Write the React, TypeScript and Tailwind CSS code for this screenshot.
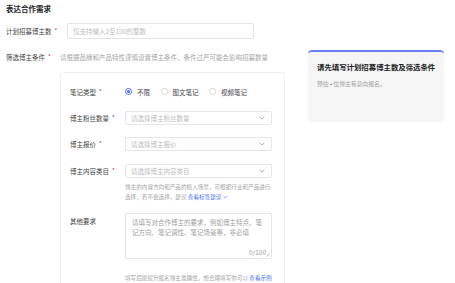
import React from "react";

const Star = () => <span className="text-[#f5222d] ml-[3px] text-[6px]">*</span>;

const Chevron = () => (
  <svg width="6" height="4" viewBox="0 0 6 4" className="shrink-0">
    <path d="M0.6 0.8 L3 3.1 L5.4 0.8" fill="none" stroke="#9a9a9a" strokeWidth="0.8" />
  </svg>
);

const Select = ({ text }: { text: string }) => (
  <div className="w-[147px] h-[14px] border border-[#e6e6e6] rounded-[2px] flex items-center justify-between pl-[5px] pr-[6px] text-[6.5px] text-[#bdbdbd]">
    <span>{text}</span>
    <Chevron />
  </div>
);

const Radio = ({ checked, label }: { checked?: boolean; label: string }) => (
  <div className="flex items-center">
    {checked ? (
      <div className="w-[7px] h-[7px] rounded-full border border-[#4c6ef5] flex items-center justify-center">
        <div className="w-[3.5px] h-[3.5px] rounded-full bg-[#4c6ef5]" />
      </div>
    ) : (
      <div className="w-[7px] h-[7px] rounded-full border border-[#d9d9d9] bg-white" />
    )}
    <span className="ml-[5px] text-[6.5px] text-[#444]">{label}</span>
  </div>
);

export default function App() {
  return (
    <div className="w-[455px] h-[283px] overflow-hidden bg-white font-['Noto_Sans_CJK_SC',sans-serif] leading-[10px]">
      <div className="flex">
        <div className="w-[300px] pl-[6px] shrink-0">
          <div className="pt-[4px] text-[7.5px] leading-[10px] font-bold text-[#222]">表达合作需求</div>

          <div className="mt-[9px] flex items-center h-[16px]">
            <div className="w-[61px] text-[6.5px] text-[#444] flex items-center">
              计划招募博主数<Star />
            </div>
            <div className="w-[187px] h-[16px] border border-[#e6e6e6] rounded-[2px] pl-[5px] flex items-center text-[6.5px] text-[#bdbdbd]">
              仅支持输入2至100的整数
            </div>
          </div>

          <div className="mt-[13px] flex items-center h-[10px]">
            <div className="w-[54px] text-[6.5px] text-[#444] flex items-center">
              筛选博主条件<Star />
            </div>
            <div className="text-[6.5px] text-[#a6a6a6] whitespace-nowrap">
              请根据品牌和产品特性谨慎设置博主条件，条件过严可能会影响招募数量
            </div>
          </div>

          <div className="mt-[10px] ml-[54px] w-[225px] h-[260px] border border-[#f0f0f0] rounded-[3px] pl-[9px] pt-[11.5px]">
            <div className="flex items-center h-[14px]">
              <div className="w-[55px] text-[6.5px] text-[#444] flex items-center">
                笔记类型<Star />
              </div>
              <div className="flex items-center gap-[10.5px]">
                <Radio checked label="不限" />
                <Radio label="图文笔记" />
                <Radio label="视频笔记" />
              </div>
            </div>

            <div className="mt-[12.5px] flex items-center h-[14px]">
              <div className="w-[55px] text-[6.5px] text-[#444] flex items-center">
                博主粉丝数量<Star />
              </div>
              <Select text="请选择博主粉丝数量" />
            </div>

            <div className="mt-[12px] flex items-center h-[14px]">
              <div className="w-[55px] text-[6.5px] text-[#444] flex items-center">
                博主报价<Star />
              </div>
              <Select text="请选择博主报价" />
            </div>

            <div className="mt-[13px] flex items-center h-[14px]">
              <div className="w-[55px] text-[6.5px] text-[#444] flex items-center">
                博主内容类目<Star />
              </div>
              <Select text="请选择博主内容类目" />
            </div>

            <div className="mt-[3.5px] ml-[55px] w-[150px] text-[5.6px] leading-[10px] text-[#a6a6a6]">
              <div className="whitespace-nowrap">博主的内容方向和产品的植入场景，可根据行业和产品进行</div>
              <div className="whitespace-nowrap flex items-center">
                选择，若不会选择，建议&nbsp;<span className="text-[#4c6ef5]">查看标签建议</span>
                <svg width="5" height="4" viewBox="0 0 6 4" className="ml-[2px]">
                  <path d="M0.6 0.8 L3 3.1 L5.4 0.8" fill="none" stroke="#4c6ef5" strokeWidth="0.8" />
                </svg>
              </div>
            </div>

            <div className="mt-[11.5px] flex items-start">
              <div className="w-[55px] pt-[2.5px] text-[6.5px] text-[#444]">其他要求</div>
              <div className="relative w-[147px] h-[46px] border border-[#e6e6e6] rounded-[2px] pl-[6px] pr-[4px] pt-[2.5px] text-[6.5px] leading-[10px] text-[#a0a0a0]">
                <div className="whitespace-nowrap">请填写对合作博主的要求，例如博主特点、笔</div>
                <div className="whitespace-nowrap">记方向、笔记调性、笔记场景等，非必填</div>
                <div className="absolute right-[5px] bottom-[1px] text-[6.5px] text-[#9a9a9a]">0/100</div>
                <svg width="4" height="4" viewBox="0 0 4 4" className="absolute right-[1px] bottom-[1px]">
                  <path d="M3.5 0.5 L0.5 3.5 M3.5 2 L2 3.5" stroke="#999" strokeWidth="0.5" />
                </svg>
              </div>
            </div>

            <div className="mt-[13.5px] ml-[55px] whitespace-nowrap text-[5.6px] leading-[10px] text-[#a6a6a6]">
              填写后能提升报名博主准确性，想合理填写你可以&nbsp;<span className="text-[#4c6ef5]">查看示例</span>
            </div>
          </div>
        </div>

        <div className="ml-[8px] mt-[50px] w-[136px] h-[72px] rounded-[4px] bg-[#f5f5f6] border-t-2 border-[#6d7ef5] pl-[9px] pt-[9.5px] shrink-0">
          <div className="text-[7.4px] leading-[10px] font-bold text-[#222] whitespace-nowrap">请先填写计划招募博主数及筛选条件</div>
          <div className="mt-[7.5px] text-[5.8px] leading-[10px] text-[#a0a0a0] whitespace-nowrap">
            预估 <span className="text-[#333] font-bold">-</span> 位博主有意向报名。
          </div>
        </div>
      </div>
    </div>
  );
}
